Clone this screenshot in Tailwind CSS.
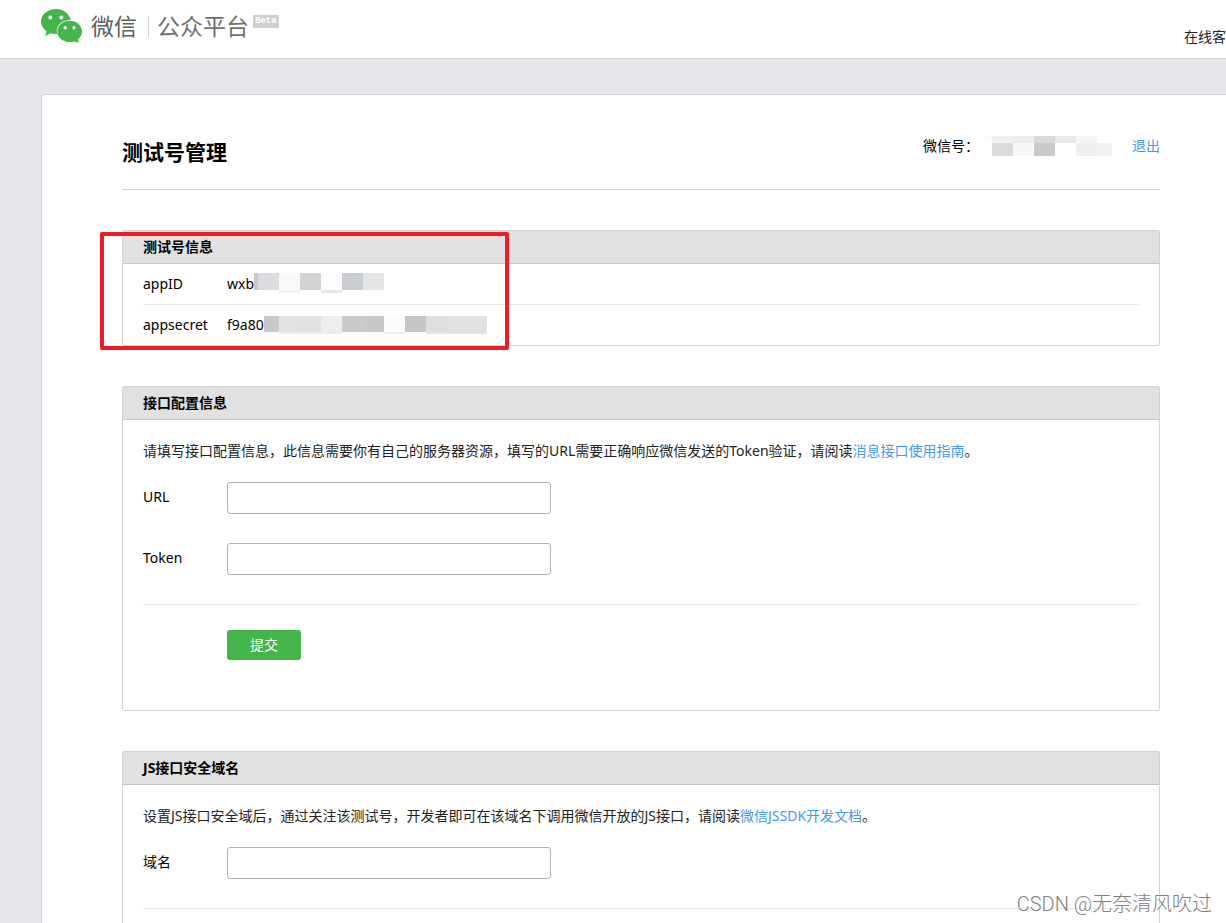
<!DOCTYPE html>
<html lang="zh-CN">
<head>
<meta charset="utf-8">
<title>微信公众平台 测试号管理</title>
<script src="https://cdn.jsdelivr.net/npm/@tailwindcss/browser@4"></script>
</head>
<body class="relative h-screen overflow-hidden bg-[#e7e8eb] font-['Noto_Sans','Noto_Sans_CJK_SC',sans-serif] text-sm text-black">
<header class="flex h-[59px] justify-between border-b border-[#d9dadc] bg-white pl-[41px]">
  <a href="#" class="flex items-start pt-2 text-[#606060]">
    <svg class="mt-px h-[34px] w-[41px]" viewBox="0 0 41 34" aria-hidden="true">
      <path fill="#44b549" d="M15 0C6.700 0 0 5.600 0 12.600c0 4 2.200 7.400 5.500 9.700L4.300 27l5.100-2.700c1.800.5 3.700.8 5.600.8h1.300A10 10 0 0 1 15.700 22c0-6.200 5.900-11 13.200-11h.9C28.400 4.700 22.300 0 15 0z"/>
      <path fill="#44b549" d="M41 22.500c0-5.900-5.500-10.700-12.300-10.700s-12.400 4.800-12.400 10.700 5.600 10.600 12.400 10.600c1.600 0 3.200-.3 4.600-.7l4.500 1.600-1.100-3.500c2.600-2 4.300-4.800 4.300-8z"/>
      <g fill="#fff"><circle cx="9.300" cy="8.500" r="1.900"/><circle cx="20.300" cy="8.500" r="1.900"/><circle cx="24.200" cy="18.700" r="1.700"/><circle cx="33" cy="18.700" r="1.700"/></g>
    </svg>
    <span class="ml-[9px] text-[23px] leading-9">微信</span>
    <span class="mt-2 ml-[11px] h-[21px] w-px bg-[#cfcfcf]"></span>
    <span class="ml-2 text-[23px] leading-9 text-[#707070]">公众平台</span>
    <span class="mt-[7px] ml-1 h-[13px] bg-[#cfcfcf] px-[2px] font-['Liberation_Mono',monospace] text-[9px] leading-[13px] font-bold text-white">Beta</span>
  </a>
  <nav class="pt-[26px]"><a href="#" class="block leading-[22px] text-[#222]">在线客</a></nav>
</header>

<main class="mt-[35px] ml-[41px] rounded-tl-[3px] border-t border-l border-[#d3d3d3] bg-white pr-[66px] pb-20 pl-20">
  <div class="flex h-[95px] justify-between border-b border-[#d3d3d3]">
    <h1 class="pt-[41px] text-[21px] leading-8 font-bold">测试号管理</h1>
    <div class="flex items-start pt-10">
      <span class="leading-[22px]">微信号：</span>
      <svg class="mt-px ml-[5px] h-5 w-32" viewBox="0 0 128 20" shape-rendering="crispEdges" aria-hidden="true">
        <path fill="#fafafa" d="M0 0h8v7H0z"/><path fill="#f0f1f3" d="M8 0h21v7H8z"/><path fill="#ededee" d="M29 0h21v7H29z"/><path fill="#dcd9d8" d="M50 0h21v7H50z"/><path fill="#e9e9e9" d="M71 0h21v7H71z"/><path fill="#f4f5f7" d="M92 0h21v7H92z"/>
        <path fill="#dadddc" d="M8 7h21v13H8z"/><path fill="#f7f7f7" d="M29 7h21v13H29z"/><path fill="#c9cbc8" d="M50 7h21v13H50z"/><path fill="#efefef" d="M92 7h21v13H92z"/><path fill="#f2f2f2" d="M113 7h15v13h-15z"/>
      </svg>
      <a href="#" class="ml-5 leading-[22px] text-[#459ae9]">退出</a>
    </div>
  </div>

  <div class="mt-10 flex flex-col gap-10">
    <section class="relative rounded-xs border border-[#d3d3d3]">
      <h2 class="h-[33px] border-b border-[#c5c5c5] bg-[#e1e1e1] px-5 leading-8 font-bold">测试号信息</h2>
      <dl class="px-5">
        <div class="flex h-[41px] border-b border-[#e5e5e5]">
          <dt class="w-[84px] leading-10">appID</dt>
          <dd class="flex leading-10">wxb
            <svg class="mt-[9px] h-5 w-[130px]" viewBox="0 0 130 20" shape-rendering="crispEdges" aria-hidden="true">
              <path fill="#c9c9cb" d="M0 0h4v17H0z"/><path fill="#dcdce0" d="M4 0h21v17H4z"/><path fill="#f9f9f9" d="M25 0h21v17H25z"/><path fill="#d5d2d3" d="M46 0h21v17H46z"/><path fill="#fdfdfd" d="M67 0h21v17H67z"/><path fill="#c9cdd1" d="M88 0h21v17H88z"/><path fill="#e6e6e7" d="M109 0h21v17h-21z"/><path fill="#f2f2f2" d="M25 17h21v3H25z"/><path fill="#e6e6e6" d="M67 17h21v3H67z"/>
            </svg>
          </dd>
        </div>
        <div class="flex h-10">
          <dt class="w-[84px] leading-10">appsecret</dt>
          <dd class="flex leading-10">f9a80
            <svg class="mt-[11px] h-[18px] w-[223px]" viewBox="0 0 223 18" shape-rendering="crispEdges" aria-hidden="true">
              <path fill="#c7c8cd" d="M0 0h15v16H0z"/><path fill="#e1e3e2" d="M15 0h21v16H15z"/><path fill="#e1e1df" d="M36 0h21v16H36z"/><path fill="#eceeee" d="M57 0h21v16H57z"/><path fill="#cbcbcf" d="M78 0h21v16H78z"/><path fill="#c8c8c8" d="M99 0h21v16H99z"/><path fill="#fcfcfc" d="M120 0h21v16h-21z"/><path fill="#c5c5c3" d="M141 0h21v16h-21z"/><path fill="#dededd" d="M162 0h21v16h-21z"/><path fill="#e2e1df" d="M183 0h21v16h-21z"/><path fill="#e0e1e5" d="M204 0h19v16h-19z"/><path fill="#ebebeb" d="M120 16h21v2h-21zM15 16h63v2H15z"/><path fill="#e4e4e4" d="M162 16h61v2h-61z"/>
            </svg>
          </dd>
        </div>
      </dl>
      <div class="absolute top-px -left-[23px] h-[118px] w-[409px] rounded-xs border-4 border-[#ee1c25]"></div>
    </section>

    <section class="rounded-xs border border-[#d3d3d3]">
      <h2 class="h-[33px] border-b border-[#c5c5c5] bg-[#e1e1e1] px-5 leading-8 font-bold">接口配置信息</h2>
      <form class="px-5 pt-5 pb-[50px]">
        <p class="leading-[22px] text-[#222]">请填写接口配置信息，此信息需要你有自己的服务器资源，填写的URL需要正确响应微信发送的Token验证，请阅读<a href="#" class="text-[#459ae9]">消息接口使用指南</a>。</p>
        <div class="mt-5 flex flex-col gap-[29px] border-b border-[#e5e5e5] pb-[29px]">
          <div class="flex"><label for="url" class="w-[84px] leading-[30px]">URL</label><input id="url" type="text" class="h-8 w-[324px] rounded-[3px] border border-[#b3b3b3] px-2"></div>
          <div class="flex"><label for="token" class="w-[84px] leading-[30px]">Token</label><input id="token" type="text" class="h-8 w-[324px] rounded-[3px] border border-[#b3b3b3] px-2"></div>
        </div>
        <button type="button" class="mt-[25px] ml-[84px] block h-[30px] rounded-[3px] bg-[#44b549] px-[23px] leading-[30px] text-white">提交</button>
      </form>
    </section>

    <section class="rounded-xs border border-[#d3d3d3]">
      <h2 class="h-[33px] border-b border-[#c5c5c5] bg-[#e1e1e1] px-5 leading-8 font-bold">JS接口安全域名</h2>
      <form class="px-5 pt-5 pb-[50px]">
        <p class="leading-[22px] text-[#222]">设置JS接口安全域后，通过关注该测试号，开发者即可在该域名下调用微信开放的JS接口，请阅读<a href="#" class="text-[#459ae9]">微信JSSDK开发文档</a>。</p>
        <div class="mt-5 border-b border-[#e5e5e5] pb-[29px]">
          <div class="flex"><label for="domain" class="w-[84px] leading-[30px]">域名</label><input id="domain" type="text" class="h-8 w-[324px] rounded-[3px] border border-[#b3b3b3] px-2"></div>
        </div>
      </form>
    </section>
  </div>
</main>
<p class="absolute right-[14px] bottom-1 font-['Roboto','Noto_Sans_CJK_SC',sans-serif] text-xl leading-[30px] font-light text-[#808080] text-shadow-[-1px_-1px_0_#fff]">CSDN @无奈清风吹过</p>
</body>
</html>
